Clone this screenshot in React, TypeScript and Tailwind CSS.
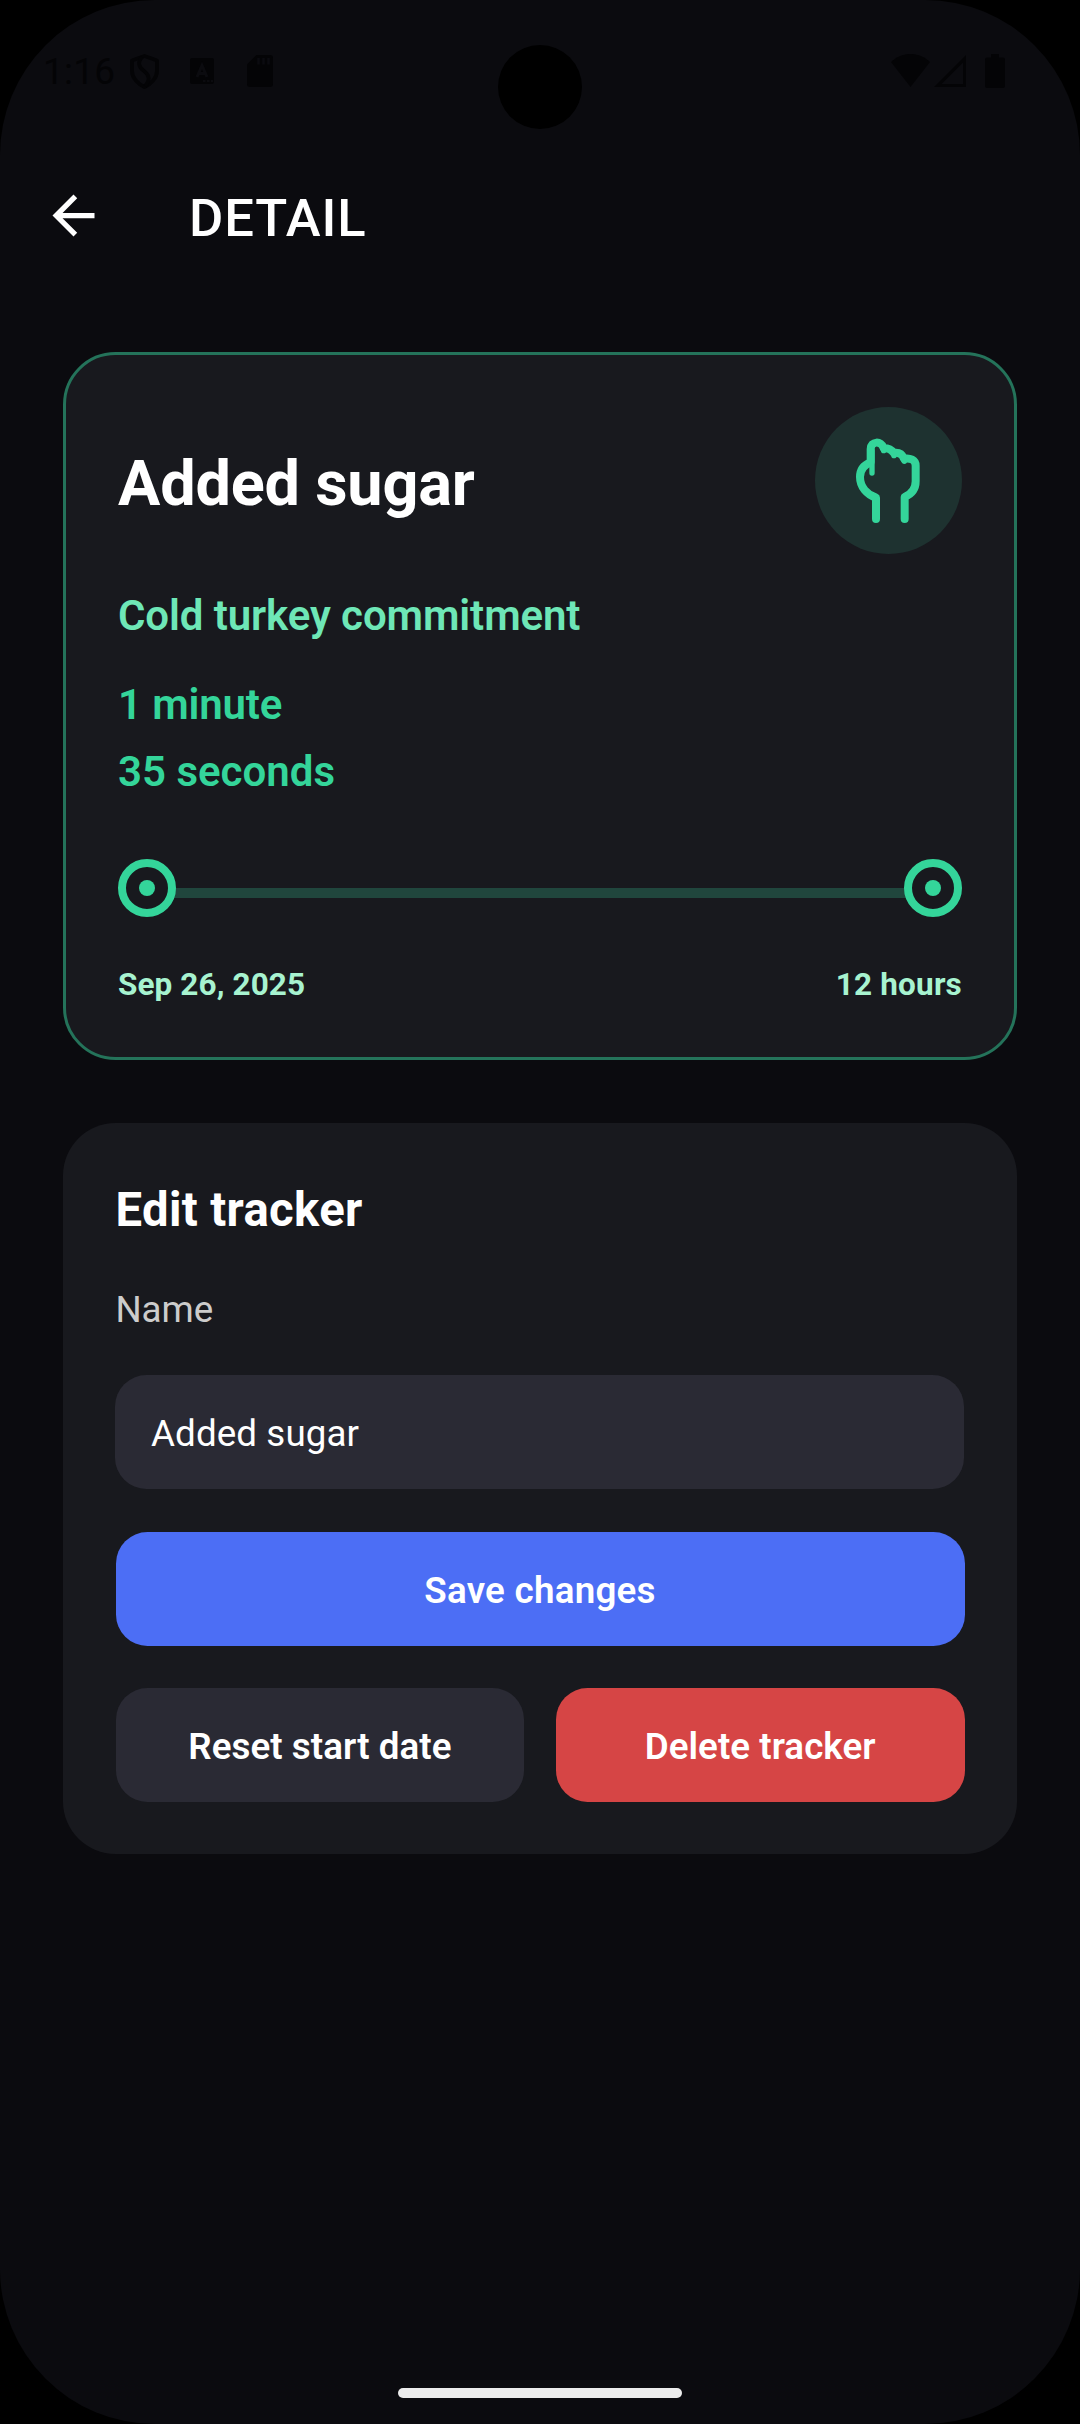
import React from "react";

function StatusBar() {
  return (
    <div className="flex h-[142px] items-start text-[#040406]">
      <span className="ml-[43px] mt-[50px] w-[87px] text-[37px] leading-[43px] tracking-[0.2px]">1:16</span>
      <svg className="mt-[54px] h-[35px] w-[29px]" viewBox="0 0 29 35" fill="none" stroke="currentColor" strokeWidth="3.8">
        <path d="M14.5 2 27 6.500V17C27 24 21 30 14.500 33 8 30 2 24 2 17V6.500Z" strokeLinejoin="round" />
        <path d="M12 3C7 9 9 13 14 17C20 22 20 26 15 32" />
      </svg>
      <svg className="ml-[31px] mt-[58px] h-[26px] w-[24px]" viewBox="0 0 24 26">
        <rect width="24" height="26" rx="2" fill="currentColor" />
        <path d="M7 19 12 7.500 17 19M9 15.500H15" fill="none" stroke="#0b0b0f" strokeWidth="3" />
        <path d="M13 23h2.500M17 23h2.500M21 23h2" stroke="#0b0b0f" strokeWidth="2" />
      </svg>
      <svg className="ml-[33px] mt-[55px] h-[32px] w-[26px]" viewBox="0 0 26 32">
        <path d="M9.500 0H23a3 3 0 0 1 3 3V29a3 3 0 0 1-3 3H3a3 3 0 0 1-3-3V9.500Z" fill="currentColor" />
        <path d="M11.500 3v6.500M16.500 3v6.500M21.500 3v6.500" stroke="#0b0b0f" strokeWidth="2.600" />
      </svg>
      <svg className="ml-auto mt-[54px] h-[33px] w-[39px]" viewBox="0 0 39 33" fill="currentColor">
        <path d="M0 8C11-2.700 28-2.700 39 8L19.500 33Z" />
      </svg>
      <svg className="ml-[4px] mt-[55px] h-[32px] w-[32px]" viewBox="0 0 32 32" fill="currentColor">
        <path fillRule="evenodd" d="M32 0V32H0ZM29 7.500 7.500 29H29Z" />
      </svg>
      <svg className="ml-[19px] mr-[75px] mt-[54px] h-[34px] w-[20px]" viewBox="0 0 20 34" fill="currentColor">
        <path d="M6 0H14V3.500H18a2 2 0 0 1 2 2V32a2 2 0 0 1-2 2H2a2 2 0 0 1-2-2V5.500a2 2 0 0 1 2-2H6Z" />
      </svg>
    </div>
  );
}

function FistIcon() {
  return (
    <svg className="size-full" viewBox="45 200 441 441" fill="none" stroke="#34d59a" strokeLinecap="round" strokeLinejoin="round">
      <path
        strokeWidth="24"
        d="M228 536V472C201 463 180 440 180 410C180 390 192 374 212 366V326C212 302 244 300 251 323C262 323 273 325 281 338C294 336 306 340 312 355C330 352 347 358 347 376V423C347 445 336 461 314 470V536"
      />
      <path strokeWidth="16" d="M216 330V398M251 322V331M282 337V346M313 352V363" />
    </svg>
  );
}

function Node() {
  return (
    <div className="z-10 flex size-[58px] items-center justify-center rounded-full border-8 border-[#34d59a] bg-[#18191e]">
      <div className="size-4 rounded-full bg-[#34d59a]" />
    </div>
  );
}

function Button({ label, tone }: { label: string; tone: string }) {
  return (
    <button className={`h-[114px] flex-1 rounded-[31.5px] pt-[3px] text-[36.75px] font-semibold leading-[43px] ${tone}`}>
      {label}
    </button>
  );
}

export default function App() {
  return (
    <div className="h-[2424px] w-[1080px] overflow-hidden bg-black font-['Roboto',sans-serif] text-white">
      <div className="relative flex h-full flex-col rounded-[155px] bg-[#0b0b0f]">
        <StatusBar />
        <div className="absolute left-[497.5px] top-[44.5px] size-[84px] rounded-full bg-black" />

        <header className="flex h-[147px] items-center pl-[42px]">
          <svg className="size-[63px]" viewBox="0 0 24 24" fill="currentColor">
            <path d="M20 11H7.830l5.590-5.590L12 4l-8 8 8 8 1.410-1.410L7.830 13H20v-2z" />
          </svg>
          <h1 className="ml-[84px] mt-[5px] text-[52.5px] font-medium leading-[62px] tracking-[0.9px]">DETAIL</h1>
        </header>

        <main className="flex flex-col gap-[63px] px-[63px] pt-[63px]">
          <section className="h-[708px] rounded-[52.5px] border-[3px] border-[#24735a] bg-[#18191e] px-[52px] pt-[52px]">
            <div className="flex items-center justify-between">
              <h2 className="mt-[6px] text-[63px] font-bold leading-[74px] tracking-[-0.2px]">Added sugar</h2>
              <div className="size-[147px] rounded-full bg-[#1e3230]">
                <FistIcon />
              </div>
            </div>
            <p className="mt-[37px] text-[42px] font-semibold leading-[50px] tracking-[-0.1px] text-[#6ee7b7]">Cold turkey commitment</p>
            <div className="mt-[30px] text-[42px] font-semibold leading-[67px] text-[#34d59a]">
              <p className="tracking-[-0.15px]">1 minute</p>
              <p>35 seconds</p>
            </div>
            <div className="mt-[54px] flex items-center">
              <Node />
              <div className="-mx-[6px] mt-[10px] h-[10px] flex-1 bg-[#20463d]" />
              <Node />
            </div>
            <div className="mt-[49px] flex justify-between text-[31.5px] font-bold leading-[38px] tracking-[0.1px] text-[#a7f3d0]">
              <span>Sep 26, 2025</span>
              <span className="tracking-[0.2px]">12 hours</span>
            </div>
          </section>

          <section className="h-[731px] rounded-[52.5px] bg-[#18191e] px-[52.5px] pt-[59px]">
            <h2 className="text-[47.25px] font-bold leading-[56px] tracking-[0.35px]">Edit tracker</h2>
            <p className="mt-[50px] text-[36.75px] leading-[43px] tracking-[-0.1px] text-[#cccccc]">Name</p>
            <div className="-ml-[0.5px] mr-[0.5px] mt-[44px] flex h-[114px] items-center rounded-[31.5px] bg-[#2a2a34] px-[36px] pt-[3px] text-[36.75px] leading-[43px] tracking-[0.1px]">
              Added sugar
            </div>
            <div className="mt-[43px] flex tracking-[0.25px]">
              <Button label="Save changes" tone="bg-[#4c6ef5]" />
            </div>
            <div className="mt-[42px] flex gap-[31.5px] tracking-[0.05px]">
              <Button label="Reset start date" tone="bg-[#2a2a34]" />
              <Button label="Delete tracker" tone="bg-[#d64545]" />
            </div>
          </section>
        </main>

        <div className="mx-auto mb-[26px] mt-auto h-[10px] w-[284px] rounded-full bg-[#ececec]" />
      </div>
    </div>
  );
}
